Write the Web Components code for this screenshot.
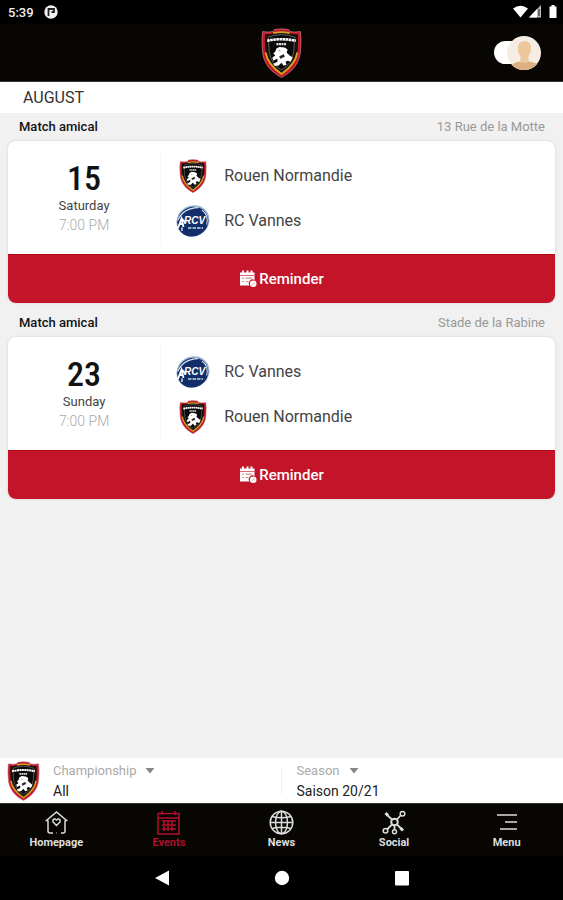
<!DOCTYPE html>
<html lang="en">
<head>
<meta charset="utf-8">
<meta name="viewport" content="width=device-width, initial-scale=1">
<title>Rouen Normandie – Events</title>
<style>
  html, body { height: 100%; }
  body { margin: 0; font-family: Roboto, "Liberation Sans", sans-serif; background: #f1f1f1; color: #333; }
</style>
</head>
<body>
<club-app></club-app>

<script>
const define = (name, html, setup) => {
  const template = document.createElement('template');
  template.innerHTML = html;
  customElements.define(name, class extends HTMLElement {
    constructor() {
      super();
      this.attachShadow({ mode: 'open' }).append(template.content.cloneNode(true));
    }
    connectedCallback() { if (setup) setup(this, this.shadowRoot); }
  });
};

/* Club crest: shield with a red and gold rim and a white lion */
define('rouen-crest', `
  <style>
    :host { display: block; width: 32px; height: 40px; }
    svg { display: block; width: 100%; height: 100%; }
  </style>
  <svg viewBox="0 0 40 49" role="img" aria-label="Rouen Normandie crest">
    <path d="M13 1.5Q20 .2 27 1.5L28 3.5Q33 4.500 38.500 3.500Q39.500 10 38.800 20C38.600 35 30 43 20 48.500C10 43 1.400 35 1.200 20Q.5 10 1.500 3.500Q7 4.500 12 3.500Z" fill="#c4162a" stroke="#c9808a" stroke-width=".7"/>
    <path d="M20 3.500Q27 3.500 28.500 5.500Q32 6.500 36 6Q36.400 10 36 20C35.500 32.500 28.500 39.500 20 45C11.500 39.500 4.500 32.500 4 20Q3.600 10 4 6Q8 6.500 11.500 5.500Q13 3.500 20 3.500Z" fill="#16110b"/>
    <path d="M12 5Q20 3 28 5M4.500 24C6 33.500 12 39.500 20 45C28 39.500 34 33.500 35.500 24" fill="none" stroke="#d9a51e" stroke-width="1.800"/>
    <path d="M7 9Q20 4 33 9L32 23Q30 36 20 41Q10 36 8 23Z" fill="#090909" stroke="#666" stroke-width=".9"/>
    <path d="M6 12.500Q20 9.500 34 12.500" fill="none" stroke="#fff" stroke-width="2.600" stroke-dasharray="2.500 .5"/>
    <path d="M15 15.800H25" stroke="#ddd" stroke-width="2" stroke-dasharray="2 .5"/>
    <path d="M15 20L18 18.500L23 19L26 21L25 24L28 27L31 29L29 33L26 32L24 33L25 36L22 37L20 34L17 37L13 37L12 35L16 33L16 30L12 32L11 29L14 27L12 25L14 23Z" fill="#fff"/>
    <path d="M18 28L22 26L23 28L19 30ZM17 22L19 22.500" fill="#222" stroke="#222" stroke-width=".5"/>
  </svg>`);

/* Opponent badge: tilted navy oval with the club initials */
define('vannes-badge', `
  <style>
    :host { display: block; width: 34px; height: 34px; }
    svg { display: block; width: 100%; height: 100%; }
    text { font: italic bold 10px "Liberation Sans", sans-serif; fill: #fff; }
  </style>
  <svg viewBox="0 0 34 34" role="img" aria-label="RC Vannes badge">
    <g transform="rotate(-30 17 17)">
      <ellipse cx="17" cy="17" rx="16.800" ry="15.500" fill="#9ab8d4"/>
      <ellipse cx="16.500" cy="17.500" rx="15.800" ry="14.600" fill="#122d69"/>
      <path d="M4 9Q15 1 28 8" fill="none" stroke="#dbe8f3" stroke-width="1.200"/>
      <path d="M30 12Q34 20 27 27" fill="none" stroke="#dbe8f3" stroke-width="1"/>
    </g>
    <path d="M2 24L5.500 14.500L7.500 23M3 20H7.500M5.500 14.500L10 19" fill="none" stroke="#fff" stroke-width="1.800"/>
    <text x="8" y="20">RCV</text>
    <path d="M6 27V22.500M12 24H27" stroke="#c8d6e6" stroke-width="1.600" stroke-dasharray="3.500 1"/>
  </svg>`);

define('status-bar', `
  <style>
    :host { display: flex; align-items: center; justify-content: space-between; height: 24px; padding: 0 6px 0 8px; background: #000; color: #eee; font-size: 13px; font-weight: 500; }
    div { display: flex; align-items: center; }
    .left { gap: 10px; }
    svg { display: block; }
  </style>
  <div class="left"><span>5:39</span>
    <svg width="14" height="14" viewBox="0 0 14 14"><circle cx="7" cy="7" r="6.700" fill="#f2f2f2"/><path d="M4.500 11V4H10V7H7.500" fill="none" stroke="#222" stroke-width="1.800"/></svg>
  </div>
  <div>
    <svg width="36" height="16" viewBox="0 0 36 16" fill="#fff"><path d="M0 4.500Q7.500-1 15 4.500L7.500 13.500Z"/><path d="M28 1V13.500H16Z" fill="#bbb"/><path d="M24 5V13.500H16Z"/><path d="M26 5V12" stroke="#333" stroke-width="1.200"/></svg>
    <svg width="8" height="16" viewBox="0 0 8 16"><path d="M2.500 1H5.500V2.500H7.500V14H.5V2.500H2.500Z" fill="#fff"/></svg>
  </div>`);

define('app-header', `
  <style>
    :host { display: grid; grid-template-columns: 1fr auto 1fr; align-items: center; height: 58px; padding: 0 22px; background: #080603; box-sizing: border-box; border-bottom: 1px solid #333; }
    rouen-crest { grid-column: 2; width: 41px; height: 50px; }
    label { justify-self: end; display: flex; align-items: center; cursor: pointer; }
    input { appearance: none; width: 30px; height: 23px; margin: 0 -17px 0 0; border-radius: 12px; background: #fff; cursor: pointer; }
    svg { position: relative; display: block; }
  </style>
  <rouen-crest></rouen-crest>
  <label>
    <input type="checkbox" role="switch" aria-label="Profile">
    <svg width="34" height="34" viewBox="0 0 34 34" aria-hidden="true">
      <circle cx="17" cy="17" r="17" fill="#f5ede3"/>
      <path d="M5 29Q7 26.500 13.500 25.500V20Q10.500 17 11 11Q11.500 5 17.500 5Q23.500 5 24 11Q24.300 17 21.500 20V25.500Q28 26.500 30 28Q25 34 17 34Q9.500 34 5 29Z" fill="#ecc79c"/>
      <path d="M5 29Q7 26.500 13.500 25.500Q17.500 28.500 21.500 25.500Q28 26.500 30 28Q25 34 17 34Q9.500 34 5 29Z" fill="#dcb084"/>
    </svg>
  </label>`);

define('month-heading', `
  <style>
    :host { display: block; padding: 0 23px; background: #fff; }
    h2 { margin: 0; font-size: 16px; font-weight: 400; line-height: 32px; height: 31px; color: #333; }
  </style>
  <h2><slot></slot></h2>`);

define('team-row', `
  <style>
    :host { display: flex; align-items: center; gap: 14px; height: 45px; font-size: 16px; font-weight: 400; color: #444; }
    .logo { display: grid; place-items: center; width: 34px; }
  </style>
  <span class="logo"><slot name="logo"></slot></span><slot></slot>`);

define('match-card', `
  <style>
    :host { display: block; padding: 0 8px 6px; }
    header { display: flex; justify-content: space-between; padding: 0 10px 0 11px; font-size: 13px; line-height: 28px; color: #999; }
    h3 { margin: 0; font-size: 13px; font-weight: 500; color: #111; }
    article { border-radius: 8px; overflow: hidden; background: #fff; box-shadow: 0 0 3px #0002; }
    .body { display: grid; grid-template-columns: 28fr 72fr; height: 113px; align-items: center; }
    .date { display: flex; flex-direction: column; align-items: center; height: 95px; border-right: 1px solid #f6f6f6; box-sizing: border-box; padding-top: 9px; }
    .day { font-family: "Roboto Condensed", "Liberation Sans Narrow", "Liberation Sans", sans-serif; font-size: 34px; line-height: 38px; font-weight: 500; color: #111; }
    .weekday { font-size: 13px; line-height: 18px; color: #444; }
    .time { font-size: 14px; line-height: 20px; font-weight: 300; color: #aaa; }
    .teams { padding: 1px 15px 0; }
    button { display: flex; align-items: center; justify-content: center; gap: 2px; width: 100%; height: 49px; padding: 0; border: 0; border-top: 1px solid #b00812; background: #c41429; color: #fff; font: 500 15px Roboto, "Liberation Sans", sans-serif; cursor: pointer; }
  </style>
  <header><h3><slot name="title"></slot></h3><span><slot name="place"></slot></span></header>
  <article>
    <div class="body">
      <div class="date"><span class="day"><slot name="day"></slot></span><span class="weekday"><slot name="weekday"></slot></span><span class="time"><slot name="time"></slot></span></div>
      <div class="teams"><slot></slot></div>
    </div>
    <button type="button">
      <svg width="18" height="18" viewBox="0 0 18 18" aria-hidden="true"><path d="M1 2.500H3V.5H5V2.500H7.500V.5H9.500V2.500H11.500V.5H13.500V2.500H15.500V10A3.800 3.800 0 0 0 10.500 15.500H1Z" fill="#fff"/><path d="M1 5.500H15.500" stroke="#dc6674" stroke-width="1"/><path d="M3 8.200H5M6.500 8.200H13M3 11.500H5M6.500 11.500H9.500" stroke="#e08b95" stroke-width="1.200"/><circle cx="14.200" cy="13.800" r="3.300" fill="#fff"/><path d="M12.500 15L14 13.800L16 12.700" fill="none" stroke="#e39aa3" stroke-width=".8"/></svg>
      Reminder
    </button>
  </article>`);

define('filter-select', `
  <style>
    :host { display: block; flex: 1; min-width: 0; }
    label { display: flex; align-items: center; gap: 9px; font-size: 13px; line-height: 20px; color: #aaa; }
    select { appearance: none; display: block; width: 100%; height: 20px; margin: 0; padding: 0; border: 0; background: none; color: #222; font: 400 14px/20px Roboto, "Liberation Sans", sans-serif; }
  </style>
  <label for="choice"><span></span><svg width="10" height="6" viewBox="0 0 10 6" aria-hidden="true"><path d="M.5 0H9.500L5 5.500Z" fill="#888"/></svg></label>
  <select id="choice"><option></option></select>`,
  (host, root) => {
    root.querySelector('span').textContent = host.getAttribute('label');
    root.querySelector('option').textContent = host.getAttribute('value');
  });

define('filter-bar', `
  <style>
    :host { display: flex; align-items: center; height: 45px; padding: 0 0 0 7px; background: #fff; }
    rouen-crest { width: 33px; height: 40px; margin-right: 13px; }
    hr { width: 1px; height: 27px; margin: 0 15px 0 0; border: 0; background: #f0f0f0; }
    filter-select:last-child { flex: 1 1 39px; }
  </style>
  <rouen-crest></rouen-crest>
  <filter-select label="Championship" value="All"></filter-select>
  <hr>
  <filter-select label="Season" value="Saison 20/21"></filter-select>`);

const icons = {
  home: '<path d="M9 23H6Q4 23 4 21V11L2.500 10.500L12.500 2L22.500 10.500L21 11V21Q21 23 19 23H17M12.500 23H13"/><path d="M12.500 15.500L9 12Q8.500 8.500 11 9L12.500 10L14 9Q16.500 8.500 16 12Z"/>',
  events: '<path d="M2 3.500H23V24H2ZM2 8H23M6 1V5M19 1V5M6 11H20M6 15H20M6 19H20M8 10V21M12 10V21M16 10V21"/>',
  news: '<circle cx="12.500" cy="12.500" r="11.300"/><ellipse cx="12.500" cy="12.500" rx="6" ry="11.300"/><path d="M12.500 1V24M1 12.500H24M3 6.500Q12.500 9 22 6.500M3 18.500Q12.500 16 22 18.500"/>',
  social: '<circle cx="12.500" cy="12" r="3.300" stroke-width="2"/><path d="M10 9.500L4.500 4.500M15 9.500L19 5M10 14.500L5 19.500M15 14.500L20 19.500M12.500 15.500V20" stroke-width="1.800"/><circle cx="20.500" cy="3.800" r="2.300"/><circle cx="3.500" cy="20.800" r="2.300"/><circle cx="12.500" cy="21.800" r="2"/><path d="M3.500 3L6 5.500M18.500 18L21 20.500" stroke-width="3"/>',
  menu: '<path d="M3 5H23M11 12H23M6 19H23"/>'
};

define('nav-item', `
  <style>
    :host { display: block; flex: 1; color: #ddd; }
    :host([active]) { color: #b00f2c; }
    a { display: flex; flex-direction: column; align-items: center; padding-top: 6px; color: inherit; text-decoration: none; font-size: 11px; line-height: 16px; font-weight: 700; }
    svg { width: 25px; height: 25px; fill: none; stroke: currentColor; stroke-width: 1.500; }
  </style>
  <a href="#"><svg viewBox="0 0 25 25" aria-hidden="true"></svg><slot></slot></a>`,
  (host, root) => {
    root.querySelector('svg').innerHTML = icons[host.getAttribute('icon')];
    if (host.hasAttribute('active')) root.querySelector('a').setAttribute('aria-current', 'page');
  });

define('tab-bar', `
  <style>:host { display: block; background: #080603; border-top: 1px solid #333; box-sizing: border-box; height: 53px; } nav { display: flex; }</style>
  <nav aria-label="Main"><slot></slot></nav>`);

define('system-bar', `
  <style>
    :host { display: grid; grid-template-columns: 120px 120px 120px; justify-content: center; height: 44px; background: #000; }
    button { display: grid; place-items: center; padding: 0; border: 0; background: none; }
  </style>
  <button type="button" aria-label="Back"><svg width="16" height="16" viewBox="0 0 16 16"><path d="M1 8L15 .5V15.500Z" fill="#fff"/></svg></button>
  <button type="button" aria-label="Home"><svg width="16" height="16" viewBox="0 0 16 16"><circle cx="8" cy="8" r="7.200" fill="#fff"/></svg></button>
  <button type="button" aria-label="Recent apps"><svg width="16" height="16" viewBox="0 0 16 16"><rect x="1" y="1" width="14" height="14.500" rx="1" fill="#fff"/></svg></button>`);

define('club-app', `
  <style>
    :host { display: flex; flex-direction: column; min-height: 100%; }
    main { flex: 1; }
    rouen-crest { width: 28px; height: 34px; }
  </style>
  <status-bar></status-bar>
  <app-header></app-header>
  <main>
    <month-heading>AUGUST</month-heading>
    <match-card>
      <span slot="title">Match amical</span><span slot="place">13 Rue de la Motte</span>
      <span slot="day">15</span><span slot="weekday">Saturday</span><span slot="time">7:00 PM</span>
      <team-row><rouen-crest slot="logo"></rouen-crest>Rouen Normandie</team-row>
      <team-row><vannes-badge slot="logo"></vannes-badge>RC Vannes</team-row>
    </match-card>
    <match-card>
      <span slot="title">Match amical</span><span slot="place">Stade de la Rabine</span>
      <span slot="day">23</span><span slot="weekday">Sunday</span><span slot="time">7:00 PM</span>
      <team-row><vannes-badge slot="logo"></vannes-badge>RC Vannes</team-row>
      <team-row><rouen-crest slot="logo"></rouen-crest>Rouen Normandie</team-row>
    </match-card>
  </main>
  <filter-bar></filter-bar>
  <tab-bar>
    <nav-item icon="home">Homepage</nav-item>
    <nav-item icon="events" active>Events</nav-item>
    <nav-item icon="news">News</nav-item>
    <nav-item icon="social">Social</nav-item>
    <nav-item icon="menu">Menu</nav-item>
  </tab-bar>
  <system-bar></system-bar>`);
</script>
</body>
</html>
